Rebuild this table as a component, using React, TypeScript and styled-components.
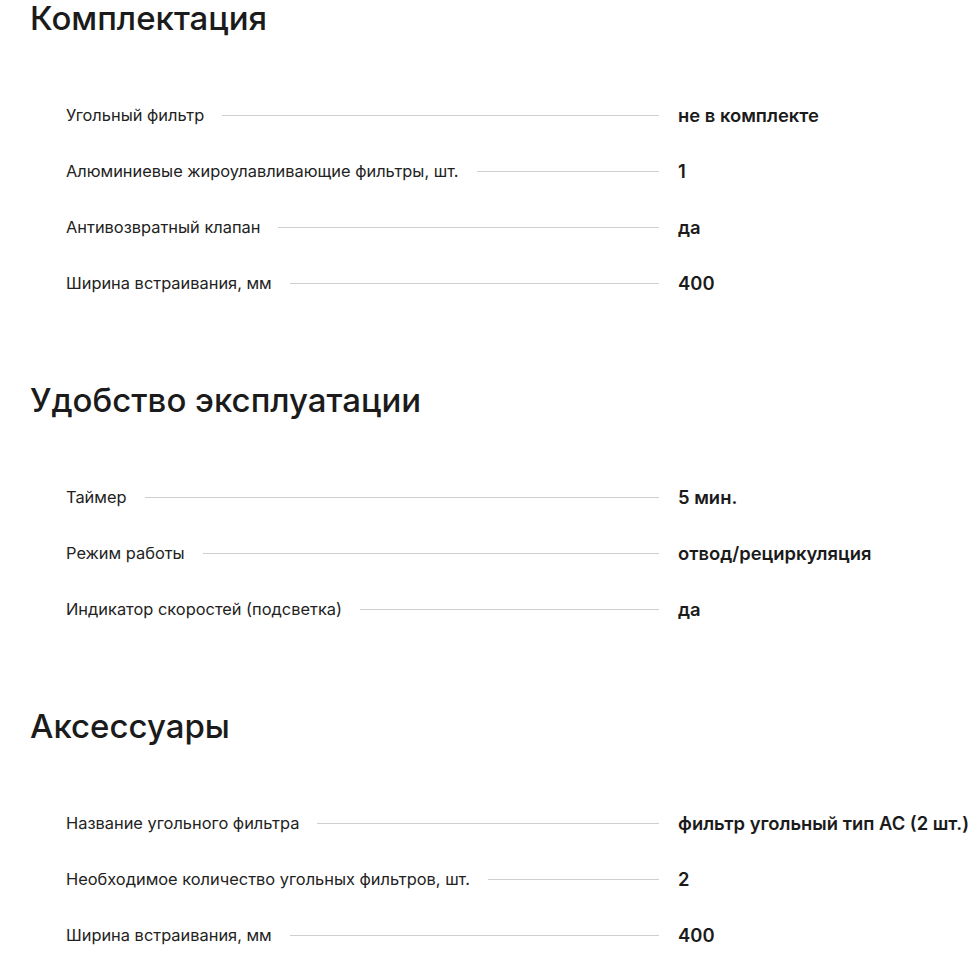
import styled, { createGlobalStyle } from "styled-components";

const GlobalStyle = createGlobalStyle`
  body {
    margin: 0;
    background: #fff;
    font-family: Inter, "Noto Sans", sans-serif;
    color: #1d1d1b;
  }
`;

type Spec = { label: string; value: string };

const sections: { title: string; specs: Spec[] }[] = [
  {
    title: "Комплектация",
    specs: [
      { label: "Угольный фильтр", value: "не в комплекте" },
      { label: "Алюминиевые жироулавливающие фильтры, шт.", value: "1" },
      { label: "Антивозвратный клапан", value: "да" },
      { label: "Ширина встраивания, мм", value: "400" },
    ],
  },
  {
    title: "Удобство эксплуатации",
    specs: [
      { label: "Таймер", value: "5 мин." },
      { label: "Режим работы", value: "отвод/рециркуляция" },
      { label: "Индикатор скоростей (подсветка)", value: "да" },
    ],
  },
  {
    title: "Аксессуары",
    specs: [
      { label: "Название угольного фильтра", value: "фильтр угольный тип AC (2 шт.)" },
      { label: "Необходимое количество угольных фильтров, шт.", value: "2" },
      { label: "Ширина встраивания, мм", value: "400" },
    ],
  },
];

const App = () => {
  return (
    <>
      <GlobalStyle />
      <Page>
        {sections.map((section) => (
          <Section key={section.title}>
            <SectionTitle>{section.title}</SectionTitle>
            <SpecList>
              {section.specs.map((spec) => (
                <SpecRow key={spec.label}>
                  <SpecName>
                    <NameText>{spec.label}</NameText>
                    <Leader />
                  </SpecName>
                  <SpecValue>{spec.value}</SpecValue>
                </SpecRow>
              ))}
            </SpecList>
          </Section>
        ))}
      </Page>
    </>
  );
};

const Page = styled.div`
  padding: 0 0 0 30px;
  width: 980px;
  box-sizing: border-box;
`;

const Section = styled.section`
  margin-bottom: 71px;

  &:last-child {
    margin-bottom: 0;
  }
`;

const SectionTitle = styled.h2`
  margin: 0 0 51px;
  font-size: 33px;
  line-height: 36px;
  font-weight: 500;
  color: #1b1b1b;
`;

const SpecList = styled.div`
  display: flex;
  flex-direction: column;
  padding-left: 36px;
`;

const SpecRow = styled.div`
  display: flex;
  align-items: center;
  height: 56px;
`;

const SpecName = styled.div`
  display: flex;
  align-items: center;
  width: 593px;
  flex-shrink: 0;
`;

const NameText = styled.span`
  font-size: 16.4px;
  color: #222;
  white-space: nowrap;
`;

const Leader = styled.span`
  flex: 1;
  height: 1px;
  background: #cfcfcf;
  margin-left: 18px;
`;

const SpecValue = styled.span`
  margin-left: 19px;
  font-size: 18.4px;
  font-weight: 600;
  color: #1b1b1b;
  white-space: nowrap;
`;

export default App;
